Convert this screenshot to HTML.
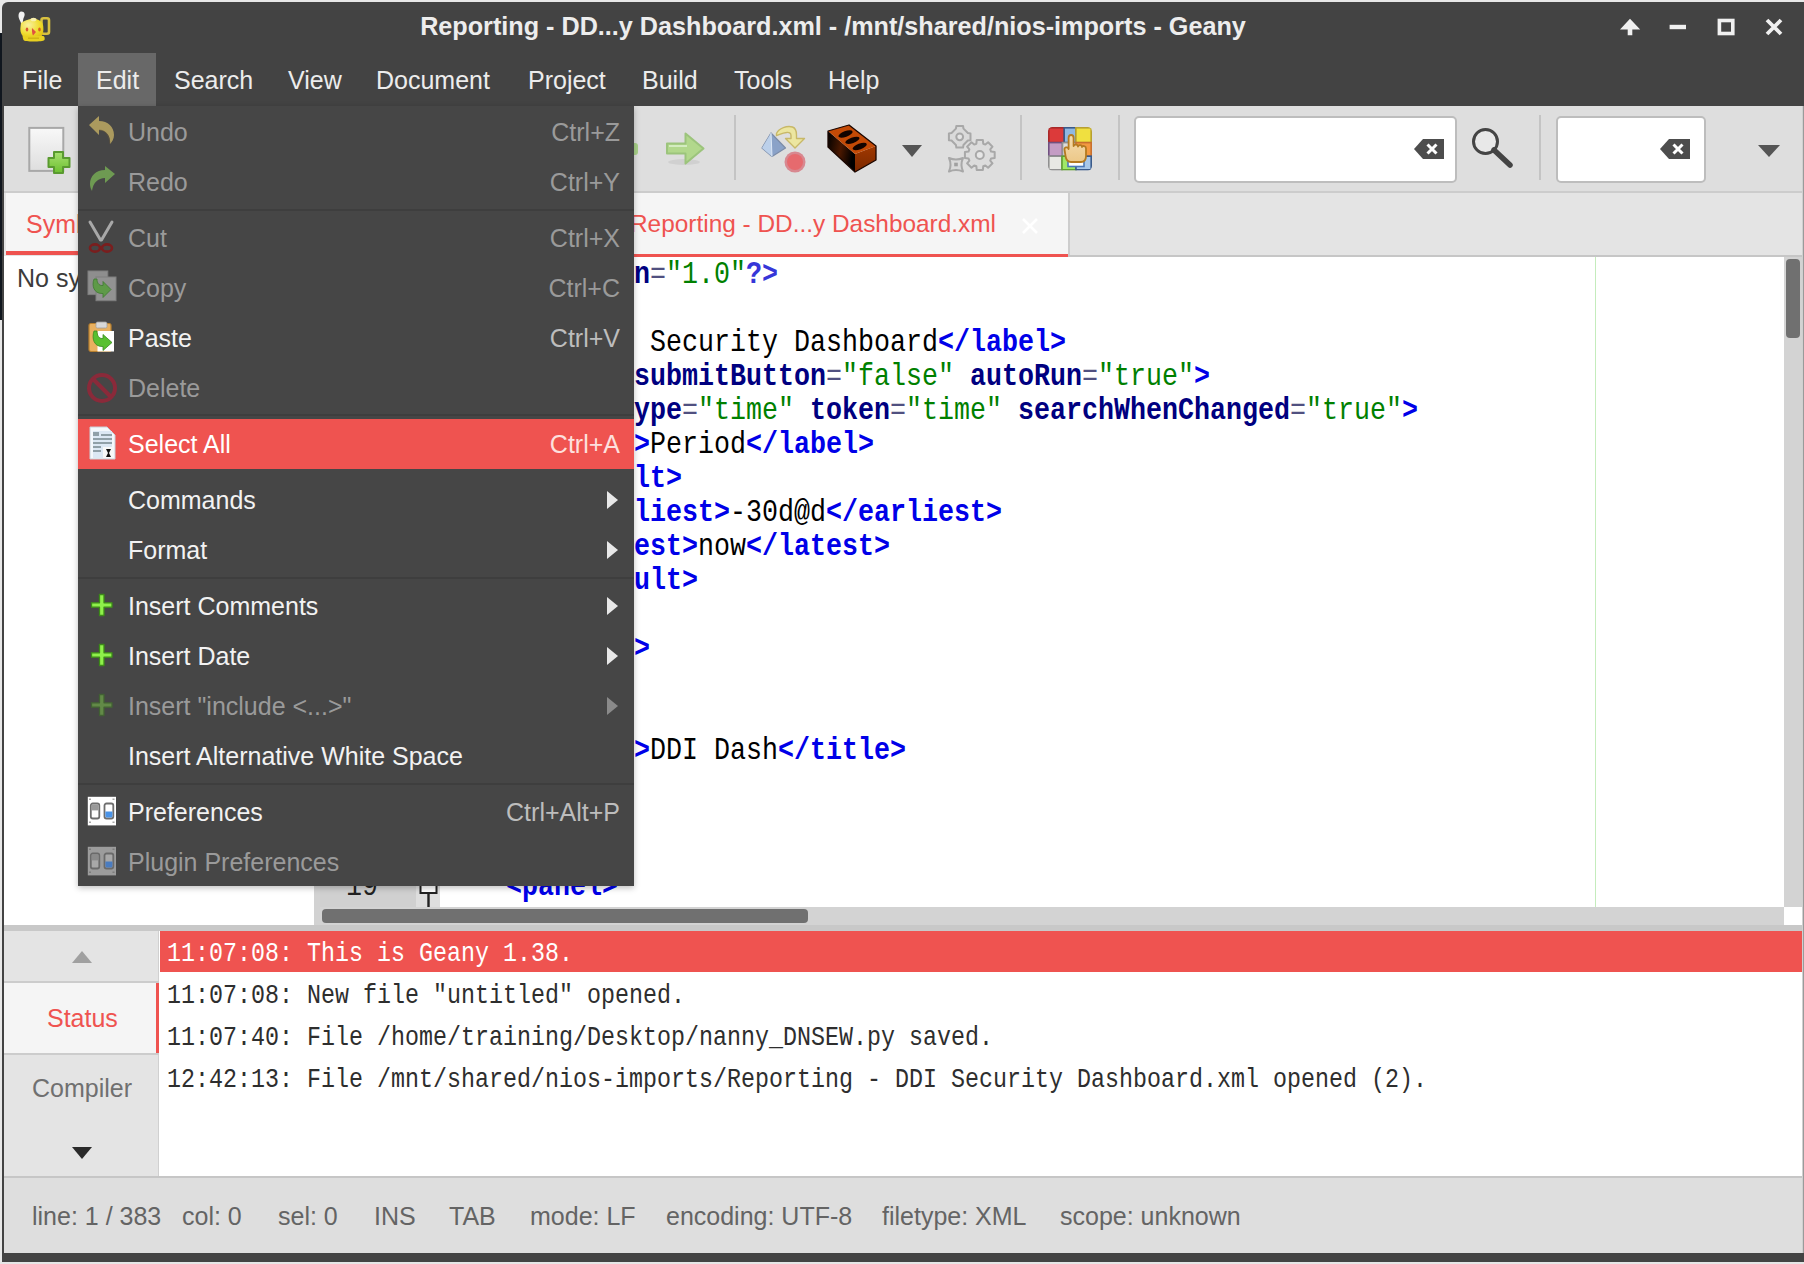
<!DOCTYPE html>
<html><head><meta charset="utf-8">
<style>
*{margin:0;padding:0;box-sizing:border-box}
html,body{width:1804px;height:1264px;overflow:hidden;background:#e8e8e8}
body{position:relative;font-family:"Liberation Sans",sans-serif}
.a{position:absolute;display:block}
.t{position:absolute;white-space:pre;line-height:1}
</style></head><body>
<div class="a" style="left:0px;top:0px;width:1804px;height:1264px;background:#e8e8e8;"></div>
<div class="a" style="left:0px;top:33px;width:3px;height:287px;background:#10161e;"></div>
<div class="a" style="left:2px;top:2px;width:1802px;height:1262px;background:#434343;border-radius:6px 0 0 0"></div>
<div class="a" style="left:1802px;top:106px;width:1px;height:1147px;background:#d0d0d0;"></div>
<div class="a" style="left:1803px;top:106px;width:1px;height:1147px;background:#9a9a9a;"></div>
<div class="t" style="left:0px;top:13.67px;font-size:25.2px;color:#ededed;font-weight:bold;font-family:'Liberation Sans',sans-serif;width:1666px;text-align:center">Reporting - DD...y Dashboard.xml - /mnt/shared/nios-imports - Geany</div>
<svg class="a" style="left:0px;top:0px;" width="60" height="48" viewBox="0 0 60 48">
<defs><radialGradient id="tpg" cx="0.35" cy="0.35" r="0.8"><stop offset="0" stop-color="#f8f0a0"/><stop offset="0.6" stop-color="#f0dc30"/><stop offset="1" stop-color="#e0c010"/></radialGradient></defs>
<path d="M21.5 11.5 C24.5 11.5 25.5 14.5 24 17 C23 19 23 21 22.5 24.5 L21.5 24.5 C20.5 21 18.5 19 18.5 16 C18.5 13 19.5 11.5 21.5 11.5 Z" fill="#f2f2f2"/>
<rect x="41.5" y="18.3" width="7.5" height="15.5" rx="2" fill="none" stroke="#d8c040" stroke-width="2.6"/>
<path d="M21 23 C24 21 28 19 33 18.5 C38 19 42 21 43 25 C44 30 43 35 41 37 L24 37 C21 35 20 31 20.5 27 Z" fill="url(#tpg)"/>
<ellipse cx="33.5" cy="19.5" rx="3" ry="1.8" fill="#f8f0b0"/>
<path d="M23 36 H43 C44.5 36 45 38 44.5 40 C43 42 24 42 23.5 40 C23 38 22 36 23 36 Z" fill="#e8d020"/>
<rect x="28" y="37.5" width="11" height="1.5" fill="#c8a810" opacity="0.7"/>
<ellipse cx="27" cy="29.5" rx="1.3" ry="2" fill="#d85a30"/>
<path d="M32 28 L36 32 L33 35.5 C32 34 31.8 30 32 28 Z" fill="#e05040"/>
<ellipse cx="39.5" cy="29.5" rx="1.3" ry="2" fill="#d86020"/>
</svg>
<svg class="a" style="left:1600px;top:0px;" width="204" height="48" viewBox="0 0 204 48">
<path d="M1620 29.4 L1630 18.7 L1640.2 29.4 L1632.3 29.4 L1632.3 35.2 L1627.7 35.2 L1627.7 29.4 Z" fill="#f0f0f0" transform="translate(-1600,0)"/>
<rect x="1669.6" y="24.8" width="16.4" height="4.4" fill="#f0f0f0" transform="translate(-1600,0)"/>
<rect x="1719.4" y="20.5" width="13.4" height="13" fill="none" stroke="#f0f0f0" stroke-width="3.6" transform="translate(-1600,0)"/>
<path d="M1767 20 L1781 34 M1781 20 L1767 34" stroke="#f0f0f0" stroke-width="3.8" transform="translate(-1600,0)"/>
</svg>
<div class="a" style="left:78px;top:53px;width:78px;height:53px;background:#686868;"></div>
<div class="t" style="left:22px;top:67.84px;font-size:25px;color:#ececec;font-weight:normal;font-family:'Liberation Sans',sans-serif;">File</div>
<div class="t" style="left:96px;top:67.84px;font-size:25px;color:#ececec;font-weight:normal;font-family:'Liberation Sans',sans-serif;">Edit</div>
<div class="t" style="left:174px;top:67.84px;font-size:25px;color:#ececec;font-weight:normal;font-family:'Liberation Sans',sans-serif;">Search</div>
<div class="t" style="left:288px;top:67.84px;font-size:25px;color:#ececec;font-weight:normal;font-family:'Liberation Sans',sans-serif;">View</div>
<div class="t" style="left:376px;top:67.84px;font-size:25px;color:#ececec;font-weight:normal;font-family:'Liberation Sans',sans-serif;">Document</div>
<div class="t" style="left:528px;top:67.84px;font-size:25px;color:#ececec;font-weight:normal;font-family:'Liberation Sans',sans-serif;">Project</div>
<div class="t" style="left:642px;top:67.84px;font-size:25px;color:#ececec;font-weight:normal;font-family:'Liberation Sans',sans-serif;">Build</div>
<div class="t" style="left:734px;top:67.84px;font-size:25px;color:#ececec;font-weight:normal;font-family:'Liberation Sans',sans-serif;">Tools</div>
<div class="t" style="left:828px;top:67.84px;font-size:25px;color:#ececec;font-weight:normal;font-family:'Liberation Sans',sans-serif;">Help</div>
<div class="a" style="left:4px;top:106px;width:1798px;height:86px;background:#dedede;"></div>
<div class="a" style="left:4px;top:191px;width:1798px;height:2px;background:#cccccc;"></div>
<svg class="a" style="left:26px;top:124px;" width="50" height="52" viewBox="0 0 50 52">
<defs><linearGradient id="pg" x1="0" y1="0" x2="0" y2="1"><stop offset="0" stop-color="#f8f8f8"/><stop offset="1" stop-color="#dedede"/></linearGradient>
<linearGradient id="plg" x1="0" y1="0" x2="0" y2="1"><stop offset="0" stop-color="#a8e070"/><stop offset="1" stop-color="#6cc030"/></linearGradient></defs>
<rect x="3.3" y="3.9" width="34" height="43" fill="url(#pg)" stroke="#a8a8a8" stroke-width="2"/>
<path d="M28 28 H37 V34 H43.5 V43 H37 V49 H28 V43 H22.5 V34 H28 Z" fill="url(#plg)" stroke="#5a9a30" stroke-width="2" stroke-linejoin="round"/>
</svg>
<div class="a" style="left:634px;top:143px;width:4px;height:12px;background:#a8d088;border-radius:0 3px 3px 0"></div>
<svg class="a" style="left:662px;top:130px;" width="46" height="38" viewBox="0 0 46 38">
<ellipse cx="22" cy="32" rx="16" ry="3" fill="#000" opacity="0.06"/>
<path d="M5 13.5 H23.5 V3.5 L41.5 18.5 L23.5 33.5 V23.5 H5 Z" fill="#b2d88c" stroke="#9cc47c" stroke-width="2" stroke-linejoin="round"/>
<path d="M7 16 H25" stroke="#d4ecc0" stroke-width="2"/>
</svg>
<div class="a" style="left:734px;top:115px;width:2px;height:65px;background:#c4c4c4;"></div>
<svg class="a" style="left:756px;top:120px;" width="56" height="56" viewBox="0 0 56 56">
<path d="M15 13 L6 28 L16 36.5 L29.5 28 Z" fill="#8aa2c8" stroke="#7c8ca8" stroke-width="1.2" stroke-linejoin="round"/>
<path d="M15 13 L6 28 L16 36.5 Z" fill="#bcd0ea"/>
<path d="M15 13 L16 36.5" stroke="#dde8f6" stroke-width="1"/>
<path d="M20.5 13.5 C23 8 31 5.5 36.5 7 C39.5 8 40.5 11 40.5 15 L40.5 18.5 L48.5 18.5 L39 28 L29.5 18.5 L35 18.5 L35 15.5 C35 13 33 12 30.5 12.5 C26 13 23 15 20.5 15.5 Z" fill="#ece6a0" stroke="#c8b868" stroke-width="1.4" stroke-linejoin="round"/>
<circle cx="39" cy="42" r="10.5" fill="#d88890"/>
<circle cx="39" cy="42" r="8" fill="#e66a6e"/>
</svg>
<svg class="a" style="left:820px;top:118px;" width="62" height="62" viewBox="0 0 62 62">
<defs>
<linearGradient id="bl" x1="0" y1="0" x2="1" y2="0.3"><stop offset="0" stop-color="#000"/><stop offset="0.55" stop-color="#4a1800"/><stop offset="1" stop-color="#000"/></linearGradient>
<linearGradient id="bf" x1="0" y1="0" x2="0" y2="1"><stop offset="0" stop-color="#a03800"/><stop offset="1" stop-color="#7a2800"/></linearGradient>
</defs>
<path d="M8 13 L35 36 L35 54 L8 29 Z" fill="url(#bl)"/>
<path d="M35 36 L56 28 L56 42 L35 54 Z" fill="url(#bf)"/>
<path d="M8 13 L20 9.5 L29 7 L56 28 L35 36 Z" fill="#c44a06"/>
<path d="M8 13 L29 7 L56 28 L56 42 L35 54 L8 29 Z" fill="none" stroke="#1a0600" stroke-width="1.3" stroke-linejoin="round"/>
<ellipse cx="25.5" cy="16" rx="7.5" ry="2.8" transform="rotate(-20 25.5 16)" fill="#120400"/>
<ellipse cx="32.4" cy="22.3" rx="7.5" ry="2.8" transform="rotate(-20 32.4 22.3)" fill="#120400"/>
<ellipse cx="39.7" cy="28.5" rx="7.5" ry="2.8" transform="rotate(-20 39.7 28.5)" fill="#120400"/>
</svg>
<svg class="a" style="left:900px;top:143px;" width="24" height="16" viewBox="0 0 24 16"><path d="M2 2 H22 L12 14 Z" fill="#555"/></svg>
<svg class="a" style="left:940px;top:120px;" width="62" height="58" viewBox="0 0 62 58">
<g stroke="#a8a8a8" stroke-width="2" stroke-linejoin="round">
<path d="M15.93 8.63 L16.33 6.01 L23.07 6.01 L23.47 8.63 L27.87 13.03 L30.49 13.43 L30.49 20.17 L27.87 20.57 L23.47 24.97 L23.07 27.59 L16.33 27.59 L15.93 24.97 L11.53 20.57 L8.91 20.17 L8.91 13.43 L11.53 13.03 Z" fill="#dadada"/>
<circle cx="19.7" cy="16.8" r="3.4" fill="#e4e4e4"/>
<path d="M36.37 23.71 L36.69 20.12 L42.91 20.12 L43.23 23.71 L45.36 24.59 L48.12 22.28 L52.52 26.68 L50.21 29.44 L51.09 31.57 L54.68 31.89 L54.68 38.11 L51.09 38.43 L50.21 40.56 L52.52 43.32 L48.12 47.72 L45.36 45.41 L43.23 46.29 L42.91 49.88 L36.69 49.88 L36.37 46.29 L34.24 45.41 L31.48 47.72 L27.08 43.32 L29.39 40.56 L28.51 38.43 L24.92 38.11 L24.92 31.89 L28.51 31.57 L29.39 29.44 L27.08 26.68 L31.48 22.28 L34.24 24.59 Z" fill="#dcdcdc"/>
<circle cx="39.8" cy="35" r="4" fill="#e6e6e6"/>
<path d="M9 38 Q16 41 23 38 Q20 44.5 23 51.5 Q16 48.5 9 51.5 Q12 44.5 9 38 Z" fill="#dadada"/>
</g>
<rect x="14.2" y="42.7" width="3.6" height="3.6" fill="#a0a0a0"/>
</svg>
<div class="a" style="left:1020px;top:115px;width:2px;height:65px;background:#c4c4c4;"></div>
<svg class="a" style="left:1044px;top:122px;" width="52" height="52" viewBox="0 0 52 52">
<defs><clipPath id="cc"><rect x="4" y="5" width="44" height="43.6" rx="4.5"/></clipPath>
<linearGradient id="hg" x1="0" y1="0" x2="0" y2="1"><stop offset="0" stop-color="#f4dcb0"/><stop offset="1" stop-color="#ecc888"/></linearGradient></defs>
<g clip-path="url(#cc)" stroke-width="1.6">
<rect x="4.8" y="5.8" width="15.4" height="14.8" fill="#dc3a3a" stroke="#a82828"/>
<rect x="20.2" y="5.8" width="11.7" height="14.8" fill="#90b8e2" stroke="#3a5a8a"/>
<rect x="31.9" y="5.8" width="15.3" height="14.8" fill="#f0e040" stroke="#b8a030"/>
<rect x="4.8" y="20.6" width="13.7" height="13.6" fill="#c49cc4" stroke="#705080"/>
<rect x="18.5" y="20.6" width="13.5" height="13.6" fill="#dcdcdc" stroke="#909090"/>
<rect x="32" y="20.6" width="15.2" height="13.6" fill="#f49a40" stroke="#c87030"/>
<rect x="4.8" y="34.2" width="13.2" height="13.6" fill="#e8e8e4" stroke="#909090"/>
<rect x="18" y="34.2" width="14" height="13.6" fill="#a0e868" stroke="#60a030"/>
<rect x="32" y="34.2" width="15.2" height="13.6" fill="#a8c8ea" stroke="#3a5a8a"/>
</g>
<rect x="24" y="39" width="16" height="5.5" fill="#ffffff" stroke="#4a78b8" stroke-width="1.6"/>
<path d="M24.6 16 C24.6 12 29.6 12 29.6 16 L29.6 24 C30 22 34 22 34 24.5 C34.5 22.5 38 22.5 38 25 C38.5 23.5 42 23.5 42 26.5 L42 34 C42 38 40 40 37 40 L27 40 C24 40 22 37.5 21.5 34 L20.5 27.5 C20 25 24 24.5 24.6 27 Z" fill="url(#hg)" stroke="#b47a20" stroke-width="1.8" stroke-linejoin="round"/>
</svg>
<div class="a" style="left:1118px;top:115px;width:2px;height:65px;background:#c4c4c4;"></div>
<div class="a" style="left:1134px;top:116px;width:323px;height:67px;background:#ffffff;border:2px solid #bdbdbd;border-radius:5px"></div>
<svg class="a" style="left:1412px;top:137px;" width="36" height="24" viewBox="0 0 36 24"><path d="M2 12 L11 2 H32 V22 H11 Z" fill="#4d4d4d"/><path d="M15.5 7.5 L24.5 16.5 M24.5 7.5 L15.5 16.5" stroke="#fff" stroke-width="3"/></svg>
<svg class="a" style="left:1468px;top:124px;" width="50" height="48" viewBox="0 0 50 48">
<circle cx="17.5" cy="17.5" r="12" fill="#e8e8e8" stroke="#444" stroke-width="3"/>
<path d="M26 26 L42 41" stroke="#444" stroke-width="5.5" stroke-linecap="round"/>
</svg>
<div class="a" style="left:1539px;top:115px;width:2px;height:65px;background:#c4c4c4;"></div>
<div class="a" style="left:1556px;top:116px;width:150px;height:67px;background:#ffffff;border:2px solid #bdbdbd;border-radius:5px"></div>
<svg class="a" style="left:1658px;top:137px;" width="36" height="24" viewBox="0 0 36 24"><path d="M2 12 L11 2 H32 V22 H11 Z" fill="#4d4d4d"/><path d="M15.5 7.5 L24.5 16.5 M24.5 7.5 L15.5 16.5" stroke="#fff" stroke-width="3"/></svg>
<svg class="a" style="left:1756px;top:143px;" width="28" height="16" viewBox="0 0 28 16"><path d="M2 2 H24 L13 14 Z" fill="#555"/></svg>
<div class="a" style="left:4px;top:193px;width:310px;height:63px;background:#e4e4e4;"></div>
<div class="a" style="left:6px;top:193px;width:308px;height:62px;background:#f5f5f5;"></div>
<div class="a" style="left:6px;top:251px;width:308px;height:4px;background:#ef5350;"></div>
<div class="t" style="left:26px;top:211.84px;font-size:25px;color:#ef5350;font-weight:normal;font-family:'Liberation Sans',sans-serif;">Symbols</div>
<div class="a" style="left:4px;top:256px;width:310px;height:669px;background:#ffffff;"></div>
<div class="t" style="left:17px;top:265.84px;font-size:25px;color:#3c3c3c;font-weight:normal;font-family:'Liberation Sans',sans-serif;">No symbols found</div>
<div class="a" style="left:314px;top:192px;width:6px;height:739px;background:#d2d2d2;"></div>
<div class="a" style="left:320px;top:193px;width:1482px;height:64px;background:#e4e4e4;"></div>
<div class="a" style="left:320px;top:255px;width:1482px;height:2px;background:#c6c6c6;"></div>
<div class="a" style="left:320px;top:193px;width:748px;height:64px;background:#f5f5f5;"></div>
<div class="a" style="left:1068px;top:193px;width:2px;height:62px;background:#cdcdcd;"></div>
<div class="a" style="left:320px;top:254px;width:748px;height:3px;background:#ef5350;"></div>
<div class="t" style="left:630px;top:212.35px;font-size:24.4px;color:#ef5350;font-weight:normal;font-family:'Liberation Sans',sans-serif;">Reporting - DD...y Dashboard.xml</div>
<svg class="a" style="left:1020px;top:216px;" width="20" height="20" viewBox="0 0 20 20"><path d="M3 3 L17 17 M17 3 L3 17" stroke="#ffffff" stroke-width="2.6"/></svg>
<div class="a" style="left:320px;top:257px;width:1464px;height:650px;background:#ffffff;"></div>
<div class="a" style="left:320px;top:257px;width:96px;height:650px;background:#d0d0d0;"></div>
<div class="a" style="left:416px;top:257px;width:24px;height:650px;background:#dedede;"></div>
<div class="a" style="left:1595px;top:257px;width:1px;height:650px;background:#c4ecbc;"></div>
<svg class="a" style="left:416px;top:868px;" width="24" height="39" viewBox="0 0 24 39"><rect x="4.5" y="17" width="16" height="8" fill="#fff" stroke="#222" stroke-width="2"/><path d="M12.5 25 V39" stroke="#222" stroke-width="2.4"/></svg>
<div class="t" style="left:634.0px;top:262.57px;font-size:26.67px;color:#000;font-weight:normal;font-family:'Liberation Mono',monospace;transform:scaleY(1.15);transform-origin:0 20.43px;"><span style="color:#000080;font-weight:bold">n</span><span style="color:#505080;font-weight:normal">=</span><span style="color:#008000;font-weight:normal">"1.0"</span><span style="color:#3636d8;font-weight:bold">?&gt;</span></div>
<div class="t" style="left:634.0px;top:330.57px;font-size:26.67px;color:#000;font-weight:normal;font-family:'Liberation Mono',monospace;transform:scaleY(1.15);transform-origin:0 20.43px;"><span style="color:#000000;font-weight:normal"> Security Dashboard</span><span style="color:#0000e8;font-weight:bold">&lt;/label&gt;</span></div>
<div class="t" style="left:634.0px;top:364.57px;font-size:26.67px;color:#000;font-weight:normal;font-family:'Liberation Mono',monospace;transform:scaleY(1.15);transform-origin:0 20.43px;"><span style="color:#000080;font-weight:bold">submitButton</span><span style="color:#505080;font-weight:normal">=</span><span style="color:#008000;font-weight:normal">"false"</span><span style="color:#000000;font-weight:normal"> </span><span style="color:#000080;font-weight:bold">autoRun</span><span style="color:#505080;font-weight:normal">=</span><span style="color:#008000;font-weight:normal">"true"</span><span style="color:#0000e8;font-weight:bold">&gt;</span></div>
<div class="t" style="left:634.0px;top:398.57px;font-size:26.67px;color:#000;font-weight:normal;font-family:'Liberation Mono',monospace;transform:scaleY(1.15);transform-origin:0 20.43px;"><span style="color:#000080;font-weight:bold">ype</span><span style="color:#505080;font-weight:normal">=</span><span style="color:#008000;font-weight:normal">"time"</span><span style="color:#000000;font-weight:normal"> </span><span style="color:#000080;font-weight:bold">token</span><span style="color:#505080;font-weight:normal">=</span><span style="color:#008000;font-weight:normal">"time"</span><span style="color:#000000;font-weight:normal"> </span><span style="color:#000080;font-weight:bold">searchWhenChanged</span><span style="color:#505080;font-weight:normal">=</span><span style="color:#008000;font-weight:normal">"true"</span><span style="color:#0000e8;font-weight:bold">&gt;</span></div>
<div class="t" style="left:634.0px;top:432.57px;font-size:26.67px;color:#000;font-weight:normal;font-family:'Liberation Mono',monospace;transform:scaleY(1.15);transform-origin:0 20.43px;"><span style="color:#0000e8;font-weight:bold">&gt;</span><span style="color:#000000;font-weight:normal">Period</span><span style="color:#0000e8;font-weight:bold">&lt;/label&gt;</span></div>
<div class="t" style="left:634.0px;top:466.57px;font-size:26.67px;color:#000;font-weight:normal;font-family:'Liberation Mono',monospace;transform:scaleY(1.15);transform-origin:0 20.43px;"><span style="color:#0000e8;font-weight:bold">lt&gt;</span></div>
<div class="t" style="left:634.0px;top:500.57px;font-size:26.67px;color:#000;font-weight:normal;font-family:'Liberation Mono',monospace;transform:scaleY(1.15);transform-origin:0 20.43px;"><span style="color:#0000e8;font-weight:bold">liest&gt;</span><span style="color:#000000;font-weight:normal">-30d@d</span><span style="color:#0000e8;font-weight:bold">&lt;/earliest&gt;</span></div>
<div class="t" style="left:634.0px;top:534.57px;font-size:26.67px;color:#000;font-weight:normal;font-family:'Liberation Mono',monospace;transform:scaleY(1.15);transform-origin:0 20.43px;"><span style="color:#0000e8;font-weight:bold">est&gt;</span><span style="color:#000000;font-weight:normal">now</span><span style="color:#0000e8;font-weight:bold">&lt;/latest&gt;</span></div>
<div class="t" style="left:634.0px;top:568.57px;font-size:26.67px;color:#000;font-weight:normal;font-family:'Liberation Mono',monospace;transform:scaleY(1.15);transform-origin:0 20.43px;"><span style="color:#0000e8;font-weight:bold">ult&gt;</span></div>
<div class="t" style="left:634.0px;top:636.57px;font-size:26.67px;color:#000;font-weight:normal;font-family:'Liberation Mono',monospace;transform:scaleY(1.15);transform-origin:0 20.43px;"><span style="color:#0000e8;font-weight:bold">&gt;</span></div>
<div class="t" style="left:634.0px;top:738.57px;font-size:26.67px;color:#000;font-weight:normal;font-family:'Liberation Mono',monospace;transform:scaleY(1.15);transform-origin:0 20.43px;"><span style="color:#0000e8;font-weight:bold">&gt;</span><span style="color:#000000;font-weight:normal">DDI Dash</span><span style="color:#0000e8;font-weight:bold">&lt;/title&gt;</span></div>
<div class="t" style="left:506.0px;top:874.57px;font-size:26.67px;color:#000;font-weight:normal;font-family:'Liberation Mono',monospace;transform:scaleY(1.15);transform-origin:0 20.43px;"><span style="color:#0000e8;font-weight:bold">&lt;panel&gt;</span></div>
<div class="t" style="left:346px;top:874.57px;font-size:26.67px;color:#222;font-weight:normal;font-family:'Liberation Mono',monospace;transform:scaleY(1.15);transform-origin:0 20.43px;">19</div>
<div class="a" style="left:1784px;top:257px;width:18px;height:650px;background:#d3d3d3;"></div>
<div class="a" style="left:1786px;top:259px;width:14px;height:79px;background:#707070;border-radius:4px"></div>
<div class="a" style="left:320px;top:907px;width:1464px;height:18px;background:#d3d3d3;"></div>
<div class="a" style="left:322px;top:909px;width:486px;height:14px;background:#707070;border-radius:4px"></div>
<div class="a" style="left:1784px;top:907px;width:18px;height:18px;background:#ffffff;"></div>
<div class="a" style="left:4px;top:925px;width:1798px;height:6px;background:#c8c8c8;"></div>
<div class="a" style="left:4px;top:931px;width:155px;height:246px;background:#e4e4e4;"></div>
<div class="a" style="left:158px;top:931px;width:1px;height:246px;background:#d0d0d0;"></div>
<svg class="a" style="left:70px;top:948px;" width="26" height="18" viewBox="0 0 26 18"><path d="M2 15 H22 L12 3 Z" fill="#a0a0a0"/></svg>
<div class="a" style="left:4px;top:981px;width:155px;height:2px;background:#cccccc;"></div>
<div class="a" style="left:4px;top:983px;width:152px;height:70px;background:#f5f5f5;"></div>
<div class="a" style="left:156px;top:983px;width:3px;height:70px;background:#ef5350;"></div>
<div class="t" style="left:47px;top:1005.84px;font-size:25px;color:#ef5350;font-weight:normal;font-family:'Liberation Sans',sans-serif;">Status</div>
<div class="a" style="left:4px;top:1053px;width:155px;height:2px;background:#cccccc;"></div>
<div class="t" style="left:32px;top:1075.84px;font-size:25px;color:#707070;font-weight:normal;font-family:'Liberation Sans',sans-serif;">Compiler</div>
<svg class="a" style="left:70px;top:1144px;" width="26" height="18" viewBox="0 0 26 18"><path d="M2 3 H22 L12 15 Z" fill="#2a2a2a"/></svg>
<div class="a" style="left:159px;top:931px;width:1643px;height:246px;background:#ffffff;"></div>
<div class="a" style="left:160px;top:931px;width:1642px;height:41px;background:#ef5350;"></div>
<div class="t" style="left:167px;top:944.13px;font-size:23.33px;color:#ffffff;font-weight:normal;font-family:'Liberation Mono',monospace;transform:scaleY(1.15);transform-origin:0 17.87px;">11:07:08: This is Geany 1.38.</div>
<div class="t" style="left:167px;top:986.13px;font-size:23.33px;color:#2e2e2e;font-weight:normal;font-family:'Liberation Mono',monospace;transform:scaleY(1.15);transform-origin:0 17.87px;">11:07:08: New file "untitled" opened.</div>
<div class="t" style="left:167px;top:1028.13px;font-size:23.33px;color:#2e2e2e;font-weight:normal;font-family:'Liberation Mono',monospace;transform:scaleY(1.15);transform-origin:0 17.87px;">11:07:40: File /home/training/Desktop/nanny_DNSEW.py saved.</div>
<div class="t" style="left:167px;top:1070.13px;font-size:23.33px;color:#2e2e2e;font-weight:normal;font-family:'Liberation Mono',monospace;transform:scaleY(1.15);transform-origin:0 17.87px;">12:42:13: File /mnt/shared/nios-imports/Reporting - DDI Security Dashboard.xml opened (2).</div>
<div class="a" style="left:4px;top:1176px;width:1798px;height:2px;background:#c6c6c6;"></div>
<div class="a" style="left:4px;top:1178px;width:1798px;height:75px;background:#dedede;"></div>
<div class="t" style="left:32px;top:1203.84px;font-size:25px;color:#646464;font-weight:normal;font-family:'Liberation Sans',sans-serif;">line: 1 / 383</div>
<div class="t" style="left:182px;top:1203.84px;font-size:25px;color:#646464;font-weight:normal;font-family:'Liberation Sans',sans-serif;">col: 0</div>
<div class="t" style="left:278px;top:1203.84px;font-size:25px;color:#646464;font-weight:normal;font-family:'Liberation Sans',sans-serif;">sel: 0</div>
<div class="t" style="left:374px;top:1203.84px;font-size:25px;color:#646464;font-weight:normal;font-family:'Liberation Sans',sans-serif;">INS</div>
<div class="t" style="left:449px;top:1203.84px;font-size:25px;color:#646464;font-weight:normal;font-family:'Liberation Sans',sans-serif;">TAB</div>
<div class="t" style="left:530px;top:1203.84px;font-size:25px;color:#646464;font-weight:normal;font-family:'Liberation Sans',sans-serif;">mode: LF</div>
<div class="t" style="left:666px;top:1203.84px;font-size:25px;color:#646464;font-weight:normal;font-family:'Liberation Sans',sans-serif;">encoding: UTF-8</div>
<div class="t" style="left:882px;top:1203.84px;font-size:25px;color:#646464;font-weight:normal;font-family:'Liberation Sans',sans-serif;">filetype: XML</div>
<div class="t" style="left:1060px;top:1203.84px;font-size:25px;color:#646464;font-weight:normal;font-family:'Liberation Sans',sans-serif;">scope: unknown</div>
<div class="a" style="left:2px;top:1253px;width:1802px;height:9px;background:#434343;"></div>
<div class="a" style="left:0px;top:1262px;width:1804px;height:2px;background:#e6e6e6;"></div>
<div class="a" style="left:78px;top:106px;width:556px;height:780px;background:#464646;box-shadow:0 2px 6px rgba(0,0,0,0.25)"></div>
<div class="a" style="left:78px;top:209px;width:556px;height:2px;background:#3e3e3e;"></div>
<div class="a" style="left:78px;top:414px;width:556px;height:2px;background:#3e3e3e;"></div>
<div class="a" style="left:78px;top:577px;width:556px;height:2px;background:#3e3e3e;"></div>
<div class="a" style="left:78px;top:783px;width:556px;height:2px;background:#3e3e3e;"></div>
<div class="t" style="left:128px;top:119.84px;font-size:25px;color:#9a9a9a;font-weight:normal;font-family:'Liberation Sans',sans-serif;">Undo</div>
<div class="t" style="left:0px;top:119.84px;font-size:25px;color:#9a9a9a;font-weight:normal;font-family:'Liberation Sans',sans-serif;width:620px;text-align:right">Ctrl+Z</div>
<div class="t" style="left:128px;top:169.84px;font-size:25px;color:#9a9a9a;font-weight:normal;font-family:'Liberation Sans',sans-serif;">Redo</div>
<div class="t" style="left:0px;top:169.84px;font-size:25px;color:#9a9a9a;font-weight:normal;font-family:'Liberation Sans',sans-serif;width:620px;text-align:right">Ctrl+Y</div>
<div class="t" style="left:128px;top:225.84px;font-size:25px;color:#9a9a9a;font-weight:normal;font-family:'Liberation Sans',sans-serif;">Cut</div>
<div class="t" style="left:0px;top:225.84px;font-size:25px;color:#9a9a9a;font-weight:normal;font-family:'Liberation Sans',sans-serif;width:620px;text-align:right">Ctrl+X</div>
<div class="t" style="left:128px;top:275.84px;font-size:25px;color:#9a9a9a;font-weight:normal;font-family:'Liberation Sans',sans-serif;">Copy</div>
<div class="t" style="left:0px;top:275.84px;font-size:25px;color:#9a9a9a;font-weight:normal;font-family:'Liberation Sans',sans-serif;width:620px;text-align:right">Ctrl+C</div>
<div class="t" style="left:128px;top:325.84px;font-size:25px;color:#f2f2f2;font-weight:normal;font-family:'Liberation Sans',sans-serif;">Paste</div>
<div class="t" style="left:0px;top:325.84px;font-size:25px;color:#bdbdbd;font-weight:normal;font-family:'Liberation Sans',sans-serif;width:620px;text-align:right">Ctrl+V</div>
<div class="t" style="left:128px;top:375.84px;font-size:25px;color:#9a9a9a;font-weight:normal;font-family:'Liberation Sans',sans-serif;">Delete</div>
<div class="a" style="left:78px;top:419px;width:556px;height:50px;background:#ef5350;"></div>
<div class="t" style="left:128px;top:431.84px;font-size:25px;color:#ffffff;font-weight:normal;font-family:'Liberation Sans',sans-serif;">Select All</div>
<div class="t" style="left:0px;top:431.84px;font-size:25px;color:#fde0de;font-weight:normal;font-family:'Liberation Sans',sans-serif;width:620px;text-align:right">Ctrl+A</div>
<div class="t" style="left:128px;top:487.84px;font-size:25px;color:#f2f2f2;font-weight:normal;font-family:'Liberation Sans',sans-serif;">Commands</div>
<svg class="a" style="left:604px;top:489px;" width="16" height="22" viewBox="0 0 16 22"><path d="M3 2 L14 11 L3 20 Z" fill="#e8e8e8"/></svg>
<div class="t" style="left:128px;top:537.84px;font-size:25px;color:#f2f2f2;font-weight:normal;font-family:'Liberation Sans',sans-serif;">Format</div>
<svg class="a" style="left:604px;top:539px;" width="16" height="22" viewBox="0 0 16 22"><path d="M3 2 L14 11 L3 20 Z" fill="#e8e8e8"/></svg>
<div class="t" style="left:128px;top:593.84px;font-size:25px;color:#f2f2f2;font-weight:normal;font-family:'Liberation Sans',sans-serif;">Insert Comments</div>
<svg class="a" style="left:604px;top:595px;" width="16" height="22" viewBox="0 0 16 22"><path d="M3 2 L14 11 L3 20 Z" fill="#e8e8e8"/></svg>
<div class="t" style="left:128px;top:643.84px;font-size:25px;color:#f2f2f2;font-weight:normal;font-family:'Liberation Sans',sans-serif;">Insert Date</div>
<svg class="a" style="left:604px;top:645px;" width="16" height="22" viewBox="0 0 16 22"><path d="M3 2 L14 11 L3 20 Z" fill="#e8e8e8"/></svg>
<div class="t" style="left:128px;top:693.84px;font-size:25px;color:#9a9a9a;font-weight:normal;font-family:'Liberation Sans',sans-serif;">Insert "include &lt;...&gt;"</div>
<svg class="a" style="left:604px;top:695px;" width="16" height="22" viewBox="0 0 16 22"><path d="M3 2 L14 11 L3 20 Z" fill="#8a8a8a"/></svg>
<div class="t" style="left:128px;top:743.84px;font-size:25px;color:#f2f2f2;font-weight:normal;font-family:'Liberation Sans',sans-serif;">Insert Alternative White Space</div>
<div class="t" style="left:128px;top:799.84px;font-size:25px;color:#f2f2f2;font-weight:normal;font-family:'Liberation Sans',sans-serif;">Preferences</div>
<div class="t" style="left:0px;top:799.84px;font-size:25px;color:#bdbdbd;font-weight:normal;font-family:'Liberation Sans',sans-serif;width:620px;text-align:right">Ctrl+Alt+P</div>
<div class="t" style="left:128px;top:849.84px;font-size:25px;color:#9a9a9a;font-weight:normal;font-family:'Liberation Sans',sans-serif;">Plugin Preferences</div>
<svg class="a" style="left:86px;top:114px;" width="32" height="32" viewBox="0 0 32 32"><path d="M3 11 L13 2 L13 7 C22 7 28 13 28 21 C28 25 26 28 24 30 C25 22 20 16 13 16 L13 21 Z" fill="#ab9a5e"/><path d="M13 16 C18 16 23 19 24 30" fill="none" stroke="#6a5a3a" stroke-width="1" opacity="0.5"/></svg>
<svg class="a" style="left:86px;top:164px;" width="32" height="30" viewBox="0 0 32 30"><path d="M29 10 L19 2 L19 6 C10 6 4 12 4 20 C4 23 5 25 6 27 C7 19 12 14 19 14 L19 19 Z" fill="#6e9a52"/></svg>
<svg class="a" style="left:86px;top:218px;" width="32" height="38" viewBox="0 0 32 38"><path d="M4 4 L14.5 22 M26 4 L15.5 22" stroke="#a8a8a8" stroke-width="3" stroke-linecap="round"/><ellipse cx="9" cy="30" rx="5" ry="3.6" fill="none" stroke="#7a1e1e" stroke-width="2.6"/><ellipse cx="21" cy="30" rx="5" ry="3.6" fill="none" stroke="#7a1e1e" stroke-width="2.6"/></svg>
<svg class="a" style="left:86px;top:268px;" width="34" height="36" viewBox="0 0 34 36"><rect x="2" y="3" width="19.8" height="23.6" fill="#8e8e8e" stroke="#7e7e7e" stroke-width="1"/><rect x="10" y="9" width="20" height="23.7" fill="#929292" stroke="#7e7e7e" stroke-width="1"/><path d="M8 11 C5.5 18 8 25.5 16 25.5 L17 25.5 L17 29.5 L25 21.5 L17 13.5 L17 17.5 L16 17.5 C13 17.5 11 15 11 11 Z" fill="#5e9a48" stroke="#3e7a30" stroke-width="0.8"/></svg>
<svg class="a" style="left:86px;top:320px;" width="34" height="36" viewBox="0 0 34 36"><rect x="3" y="3.5" width="22" height="28" rx="2" fill="#e8b060" stroke="#b88030" stroke-width="1.2"/><rect x="10" y="2" width="11" height="6" rx="1.5" fill="#d8d8d8" stroke="#a0a0a0" stroke-width="0.8"/><rect x="11.5" y="11" width="16.5" height="20.5" fill="#ffffff"/><path d="M8 11 C5.5 18.5 8 26.5 16 26.5 L17 26.5 L17 30.5 L26 22.5 L17 14.5 L17 18.5 L16 18.5 C13 18.5 11 15.5 11 11 Z" fill="#58c030" stroke="#3a8a20" stroke-width="0.8"/></svg>
<svg class="a" style="left:86px;top:372px;" width="32" height="32" viewBox="0 0 32 32"><circle cx="16" cy="16" r="13" fill="none" stroke="#8a2a3a" stroke-width="4"/><path d="M7 7 L25 25" stroke="#8a2a3a" stroke-width="4"/></svg>
<svg class="a" style="left:88px;top:425px;" width="30" height="36" viewBox="0 0 30 36"><path d="M2 2 H19 L27 10 V34 H2 Z" fill="#f4f8fc" stroke="#c8d0d8" stroke-width="1"/><rect x="5" y="6" width="19" height="27" fill="#dce8f4"/><rect x="5" y="7" width="6" height="4" fill="#90a0a8"/><rect x="13" y="9" width="11" height="2" fill="#90a0a8"/><rect x="5" y="13" width="19" height="2" fill="#90a0a8"/><rect x="5" y="17" width="19" height="2" fill="#90a0a8"/><rect x="5" y="21" width="8" height="2" fill="#90a0a8"/><rect x="5" y="25" width="8" height="2" fill="#90a0a8"/><rect x="15" y="22" width="10" height="11" fill="#f8f8f8"/><path d="M18 24 H23 L21 28 L23 32 H18 L20 28 Z" fill="#111"/></svg>
<svg class="a" style="left:90px;top:593px;" width="24" height="24" viewBox="0 0 24 24"><g opacity="1"><path d="M9.5 1.5 H14 V9.8 H22 V14.2 H14 V22.5 H9.5 V14.2 H1.5 V9.8 H9.5 Z" fill="#8ef04a" stroke="#3c8a18" stroke-width="1.3" stroke-linejoin="round"/></g></svg>
<svg class="a" style="left:90px;top:643px;" width="24" height="24" viewBox="0 0 24 24"><g opacity="1"><path d="M9.5 1.5 H14 V9.8 H22 V14.2 H14 V22.5 H9.5 V14.2 H1.5 V9.8 H9.5 Z" fill="#8ef04a" stroke="#3c8a18" stroke-width="1.3" stroke-linejoin="round"/></g></svg>
<svg class="a" style="left:90px;top:693px;" width="24" height="24" viewBox="0 0 24 24"><g opacity="0.4"><path d="M9.5 1.5 H14 V9.8 H22 V14.2 H14 V22.5 H9.5 V14.2 H1.5 V9.8 H9.5 Z" fill="#8ef04a" stroke="#3c8a18" stroke-width="1.3" stroke-linejoin="round"/></g></svg>
<svg class="a" style="left:87px;top:796px;" width="31" height="32" viewBox="0 0 31 32"><rect x="0.8" y="0.8" width="28.2" height="28.6" fill="#ffffff"/><rect x="3.8" y="7.5" width="8.5" height="15" rx="2" fill="#ffffff" stroke="#6e6e6e" stroke-width="1.8"/><rect x="4.7" y="8.4" width="6.7" height="6" fill="#999999"/><rect x="17.5" y="7.5" width="8.8" height="15" rx="2" fill="#ffffff" stroke="#6e6e6e" stroke-width="1.8"/><path d="M18.4 15.5 H25.4 V20 Q25.4 21.6 23.8 21.6 H20 Q18.4 21.6 18.4 20 Z" fill="#4a94e8"/><g fill="#6e6e6e" opacity="0.6"><rect x="2" y="2.5" width="2" height="1.5"/><rect x="25.5" y="2.5" width="2" height="1.5"/><rect x="2" y="25.5" width="2" height="1.5"/><rect x="25.5" y="25.5" width="2" height="1.5"/></g></svg>
<svg class="a" style="left:87px;top:846px;" width="31" height="32" viewBox="0 0 31 32"><rect x="0.8" y="0.8" width="28.2" height="28.6" fill="#9c9c9c"/><rect x="3.8" y="7.5" width="8.5" height="15" rx="2" fill="#a8a8a8" stroke="#6a6a6a" stroke-width="1.8"/><rect x="4.7" y="8.4" width="6.7" height="6" fill="#8a8a8a"/><rect x="17.5" y="7.5" width="8.8" height="15" rx="2" fill="#a8a8a8" stroke="#6a6a6a" stroke-width="1.8"/><path d="M18.4 15.5 H25.4 V20 Q25.4 21.6 23.8 21.6 H20 Q18.4 21.6 18.4 20 Z" fill="#4a7cc0"/><g fill="#6a6a6a" opacity="0.6"><rect x="2" y="2.5" width="2" height="1.5"/><rect x="25.5" y="2.5" width="2" height="1.5"/><rect x="2" y="25.5" width="2" height="1.5"/><rect x="25.5" y="25.5" width="2" height="1.5"/></g></svg>
</body></html>
